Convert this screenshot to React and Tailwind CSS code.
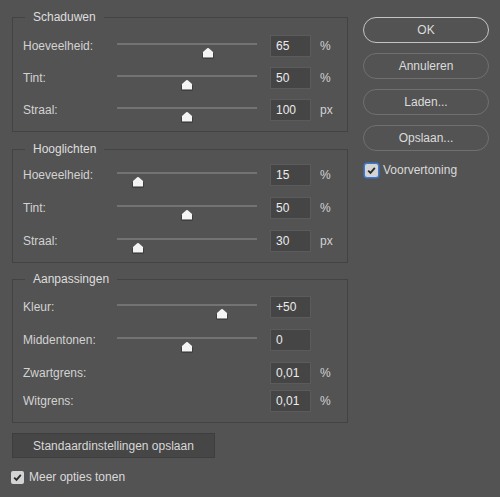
import React from "react";

const TRACK_W = 140;

// small house-shaped slider thumb
const Thumb = ({ pct }) => (
  <svg
    width="12"
    height="12"
    viewBox="0 0 12 12"
    className="absolute top-[12px]"
    style={{ left: pct * TRACK_W - 6 }}
  >
    <path d="M6 1.5 L11.5 6.5 L11.5 11.5 L0.5 11.5 L0.5 6.5 Z" fill="#2a2a2a" />
    <path d="M5.2 1.2 Q6 0.6 6.8 1.2 L11 5 L11 10.4 L1 10.4 L1 5 Z" fill="#f4f4f4" />
  </svg>
);

const Slider = ({ pct }) => (
  <div className="relative w-[140px] h-[22px] shrink-0">
    <div className="absolute left-0 right-0 top-[8px] h-[2px] bg-[#737373]" />
    <Thumb pct={pct} />
  </div>
);

const Row = ({ label, value, unit, pct }) => (
  <div className="flex items-center h-[22px]">
    <span className="w-[94px] shrink-0 text-[12px] text-[#d2d2d2]">{label}</span>
    {pct != null ? <Slider pct={pct} /> : <div className="w-[140px] shrink-0" />}
    <div className="ml-[13px] w-[41px] h-[22px] shrink-0 flex items-center pl-[5px] bg-[#454545] border border-[#5b5b5b] text-[12px] text-[#ececec]">
      {value}
    </div>
    <span className="ml-[9px] text-[12px] text-[#d2d2d2]">{unit}</span>
  </div>
);

const Group = ({ title, className, children }) => (
  <fieldset className={"border border-[#434343] pl-[10px] pr-[10px] min-w-0 " + className}>
    <legend className="ml-[2px] px-[8px] text-[12px] leading-[14px] text-[#dedede]">{title}</legend>
    {children}
  </fieldset>
);

const PillButton = ({ children, primary }) => (
  <button
    className={
      "w-[126px] h-[26px] rounded-full text-[12px] text-[#dcdcdc] " +
      (primary ? "border-[1.5px] border-[#c4c4c4]" : "border border-[#707070]")
    }
  >
    {children}
  </button>
);

const Check = ({ focus }) => (
  <span
    className={
      "w-[13px] h-[13px] shrink-0 rounded-[2px] bg-[#d4d4d4] flex items-center justify-center " +
      (focus ? "ring-[1.5px] ring-[#3b78d0]" : "")
    }
  >
    <svg width="9" height="9" viewBox="0 0 9 9">
      <path d="M1.2 4.6 L3.5 6.9 L7.8 1.8" fill="none" stroke="#2b2b2b" strokeWidth="1.8" />
    </svg>
  </span>
);

export default function App() {
  return (
    <div className="w-[500px] h-[497px] bg-[#535353] flex px-[12px] pt-[10px] font-['Liberation_Sans',Arial,sans-serif] select-none">
      {/* left column: three groups */}
      <div className="w-[336px] shrink-0 flex flex-col">
        <Group title="Schaduwen" className="pt-[11px] pb-[10px]">
          <div className="flex flex-col gap-[10px]">
            <Row label="Hoeveelheid:" value="65" unit="%" pct={0.65} />
            <Row label="Tint:" value="50" unit="%" pct={0.5} />
            <Row label="Straal:" value="100" unit="px" pct={0.5} />
          </div>
        </Group>

        <Group title="Hooglichten" className="mt-[10px] pt-[8px] pb-[10px]">
          <div className="flex flex-col gap-[11px]">
            <Row label="Hoeveelheid:" value="15" unit="%" pct={0.15} />
            <Row label="Tint:" value="50" unit="%" pct={0.5} />
            <Row label="Straal:" value="30" unit="px" pct={0.15} />
          </div>
        </Group>

        <Group title="Aanpassingen" className="mt-[9px] pt-[10px] pb-[10px]">
          <div className="flex flex-col">
            <Row label="Kleur:" value="+50" pct={0.75} />
            <div className="h-[11px]" />
            <Row label="Middentonen:" value="0" pct={0.5} />
            <div className="h-[11px]" />
            <Row label="Zwartgrens:" value="0,01" unit="%" />
            <div className="h-[6px]" />
            <Row label="Witgrens:" value="0,01" unit="%" />
          </div>
        </Group>

        <button className="mt-[10px] w-[203px] h-[25px] bg-[#464646] border border-[#3e3e3e] text-[12px] text-[#d8d8d8]">
          Standaardinstellingen opslaan
        </button>

        <label className="mt-[10px] ml-[-1px] flex items-center gap-[5px] text-[12px] text-[#dadada]">
          <Check />
          Meer opties tonen
        </label>
      </div>

      {/* right column: actions */}
      <div className="ml-[15px] pt-[7px] flex flex-col gap-[10px]">
        <PillButton primary>OK</PillButton>
        <PillButton>Annuleren</PillButton>
        <PillButton>Laden...</PillButton>
        <PillButton>Opslaan...</PillButton>
        <label className="ml-[2px] flex items-center gap-[5px] text-[12px] text-[#dadada]">
          <Check focus />
          Voorvertoning
        </label>
      </div>
    </div>
  );
}
